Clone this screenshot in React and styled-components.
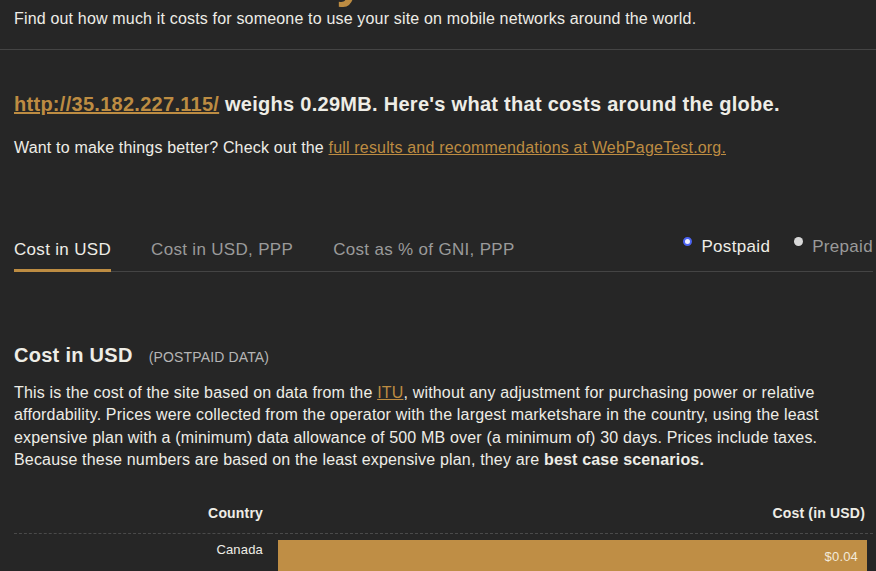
import styled, { createGlobalStyle } from "styled-components";

const GlobalStyle = createGlobalStyle`
  html, body {
    margin: 0;
    padding: 0;
    background: #262626;
    overflow: hidden;
  }
  body {
    font-family: "Liberation Sans", Arial, sans-serif;
    color: #eeede6;
    letter-spacing: 0.011em;
  }
`;

const Page = styled.div`
  width: 876px;
  height: 571px;
  overflow: hidden;
`;

const Header = styled.header`
  padding: 0 14px 20px;
  border-bottom: 1px solid #444;
`;

const Title = styled.h1`
  margin: -49px 0 0;
  font-size: 50px;
  line-height: 58px;
  font-weight: 700;
  letter-spacing: 0.02em;
  color: #bd8c42;
  white-space: nowrap;
`;

const Tagline = styled.p`
  margin: 0;
  font-size: 16px;
  line-height: 20px;
`;

const Main = styled.main`
  padding: 0 3px 0 14px;
`;

const Lead = styled.h2`
  margin: 42px 0 0;
  font-size: 20px;
  line-height: 24px;
  font-weight: 700;
  letter-spacing: 0.014em;
`;

const Link = styled.a`
  color: #bd8c42;
  text-decoration: underline;
`;

const Text = styled.p`
  margin: ${(p) => p.$top || 0}px 0 0;
  font-size: 16px;
  line-height: 22.6px;
`;

const TabBar = styled.div`
  margin-top: 77px;
  display: flex;
  align-items: flex-end;
  border-bottom: 1px solid #444;
  letter-spacing: 0.02em;
`;

const Tab = styled.div`
  font-size: 17px;
  line-height: 20px;
  padding-bottom: 9px;
  margin-right: 40px;
  color: ${(p) => (p.$active ? "#eeede6" : "#9a9a9a")};
  border-bottom: 3px solid ${(p) => (p.$active ? "#bd8c42" : "transparent")};
  margin-bottom: -1px;
`;

const Radios = styled.div`
  margin-left: auto;
  display: flex;
  gap: 24px;
  padding-bottom: 14px;
`;

const Radio = styled.label`
  display: flex;
  align-items: flex-start;
  gap: 9px;
  font-size: 17px;
  line-height: 20px;
  color: ${(p) => (p.$checked ? "#eeede6" : "#9a9a9a")};
`;

const Dot = styled.span`
  width: 9px;
  height: 9px;
  border-radius: 50%;
  box-sizing: border-box;
  background: ${(p) => (p.$checked ? "#eef0ff" : "#d8d8d8")};
  border: ${(p) => (p.$checked ? "2px solid #4b63f2" : "none")};
`;

const SectionTitle = styled.h3`
  margin: 71px 0 0;
  display: flex;
  align-items: baseline;
  font-size: 20px;
  line-height: 24px;
  font-weight: 700;
  letter-spacing: 0.014em;
`;

const Note = styled.span`
  margin-left: 16px;
  font-size: 14px;
  font-weight: 400;
  letter-spacing: 0.011em;
  color: #b5b5b5;
`;

const Table = styled.div`
  margin-top: 33px;
  display: grid;
  grid-template-columns: 256px 1fr;
  width: 859px;
`;

const HeadCell = styled.div`
  font-size: 14px;
  font-weight: 700;
  line-height: 16px;
  text-align: right;
  padding: 0 ${(p) => (p.$last ? 8 : 7)}px 12px 0;
  border-bottom: 1px dashed #4a4a4a;
`;

const Country = styled.div`
  font-size: 13px;
  line-height: 16px;
  text-align: right;
  padding: 8px 7px 0 0;
`;

const BarCell = styled.div`
  padding: 6px 6px 0 8px;
`;

const Bar = styled.div`
  height: 36px;
  background: #bf8e45;
  color: #f3ead9;
  font-size: 13px;
  line-height: 16px;
  text-align: right;
  padding: 9px 9px 0 0;
  box-sizing: border-box;
`;

const rows = [{ country: "Canada", cost: 0.04, pct: 100 }];

export default function App() {
  return (
    <Page>
      <GlobalStyle />
      <Header>
        <Title>What does my site cost?</Title>
        <Tagline>
          Find out how much it costs for someone to use your site on mobile
          networks around the world.
        </Tagline>
      </Header>
      <Main>
        <Lead>
          <Link href="#">http://35.182.227.115/</Link> weighs 0.29MB. Here's
          what that costs around the globe.
        </Lead>
        <Text $top={21}>
          Want to make things better? Check out the{" "}
          <Link href="#">full results and recommendations at WebPageTest.org.</Link>
        </Text>

        <TabBar>
          <Tab $active>Cost in USD</Tab>
          <Tab>Cost in USD, PPP</Tab>
          <Tab>Cost as % of GNI, PPP</Tab>
          <Radios>
            <Radio $checked>
              <Dot $checked />
              Postpaid
            </Radio>
            <Radio>
              <Dot />
              Prepaid
            </Radio>
          </Radios>
        </TabBar>

        <SectionTitle>
          Cost in USD <Note>(POSTPAID DATA)</Note>
        </SectionTitle>
        <Text $top={13}>
          This is the cost of the site based on data from the{" "}
          <Link href="#">ITU</Link>, without any adjustment for purchasing power
          or relative affordability. Prices were collected from the operator
          with the largest marketshare in the country, using the least expensive
          plan with a (minimum) data allowance of 500 MB over (a minimum of) 30
          days. Prices include taxes. Because these numbers are based on the
          least expensive plan, they are <b>best case scenarios.</b>
        </Text>

        <Table>
          <HeadCell>Country</HeadCell>
          <HeadCell $last>Cost (in USD)</HeadCell>
          {rows.map((r) => (
            <>
              <Country key={r.country}>{r.country}</Country>
              <BarCell key={r.country + "-bar"}>
                <Bar style={{ width: r.pct + "%" }}>${r.cost.toFixed(2)}</Bar>
              </BarCell>
            </>
          ))}
        </Table>
      </Main>
    </Page>
  );
}
